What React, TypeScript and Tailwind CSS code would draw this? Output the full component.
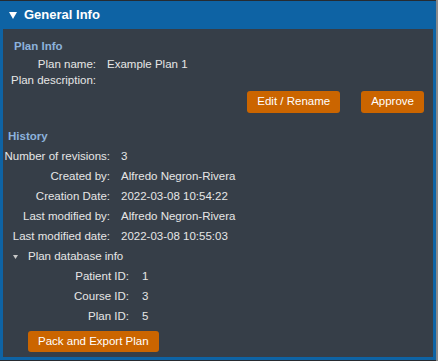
import React from "react";

const font = { fontFamily: '"Liberation Sans", Arial, sans-serif' };

function Row({ label, value, labelW, gap, h = "h-[20px]" }: { label: string; value: string; labelW: string; gap: string; h?: string }) {
  return (
    <div className={`flex items-center ${h} ${gap}`}>
      <div className={`${labelW} shrink-0 text-right`}>{label}</div>
      <div>{value}</div>
    </div>
  );
}

function Btn({ children }: { children: React.ReactNode }) {
  return (
    <button className="h-full rounded-[3px] bg-[#cb6500] px-[10px] text-[11.5px] leading-none text-white">
      {children}
    </button>
  );
}

export default function App() {
  return (
    <div className="flex h-[361px] w-[438px] bg-[#262b31]" style={font}>
      <div className="flex-1 pt-px pb-px">
        <div className="flex h-[359px] w-[436px] flex-col border-x-[3px] border-b-[3px] border-[#0e63a4] bg-[#363e48] text-[11.5px] text-[#e6e6e6]">
          <div className="-mx-[3px] flex h-[28px] shrink-0 items-center bg-[#0e63a4] pl-[9px]">
            <svg width="8" height="7" viewBox="0 0 8 7" className="mt-[1px]">
              <polygon points="0,0 8,0 4,7" fill="#ffffff" />
            </svg>
            <span className="ml-[7px] text-[13px] font-bold text-white">General Info</span>
          </div>
          <div className="flex flex-col pt-[8px] pr-[9px]">
            <div className="flex h-[20px] items-center pl-[11px] font-bold text-[#8cb2dc]">Plan Info</div>
            <Row label="Plan name:" value="Example Plan 1" labelW="w-[93px]" gap="gap-[11px]" h="h-[16px]" />
            <Row label="Plan description:" value="" labelW="w-[93px]" gap="gap-[11px]" h="h-[16px]" />
            <div className="mt-[2px] flex h-[22px] justify-end gap-[21px]">
              <Btn>Edit / Rename</Btn>
              <Btn>Approve</Btn>
            </div>
            <div className="mt-[14px] flex h-[20px] items-center pl-[5px] font-bold text-[#8cb2dc]">History</div>
            <Row label="Number of revisions:" value="3" labelW="w-[107px]" gap="gap-[11px]" />
            <Row label="Created by:" value="Alfredo Negron-Rivera" labelW="w-[107px]" gap="gap-[11px]" />
            <Row label="Creation Date:" value="2022-03-08 10:54:22" labelW="w-[107px]" gap="gap-[11px]" />
            <Row label="Last modified by:" value="Alfredo Negron-Rivera" labelW="w-[107px]" gap="gap-[11px]" />
            <Row label="Last modified date:" value="2022-03-08 10:55:03" labelW="w-[107px]" gap="gap-[11px]" />
            <div className="flex h-[20px] items-center pl-[10px]">
              <svg width="5" height="4" viewBox="0 0 5 4">
                <polygon points="0,0 5,0 2.5,4" fill="#c8c8c8" />
              </svg>
              <span className="ml-[10px]">Plan database info</span>
            </div>
            <Row label="Patient ID:" value="1" labelW="w-[126px]" gap="gap-[13px]" />
            <Row label="Course ID:" value="3" labelW="w-[126px]" gap="gap-[13px]" />
            <Row label="Plan ID:" value="5" labelW="w-[126px]" gap="gap-[13px]" />
            <div className="mt-[4px] flex h-[21px] pl-[25px]">
              <Btn>Pack and Export Plan</Btn>
            </div>
          </div>
        </div>
      </div>
      <div className="w-[2px] bg-[#8a8a8a]" />
    </div>
  );
}
